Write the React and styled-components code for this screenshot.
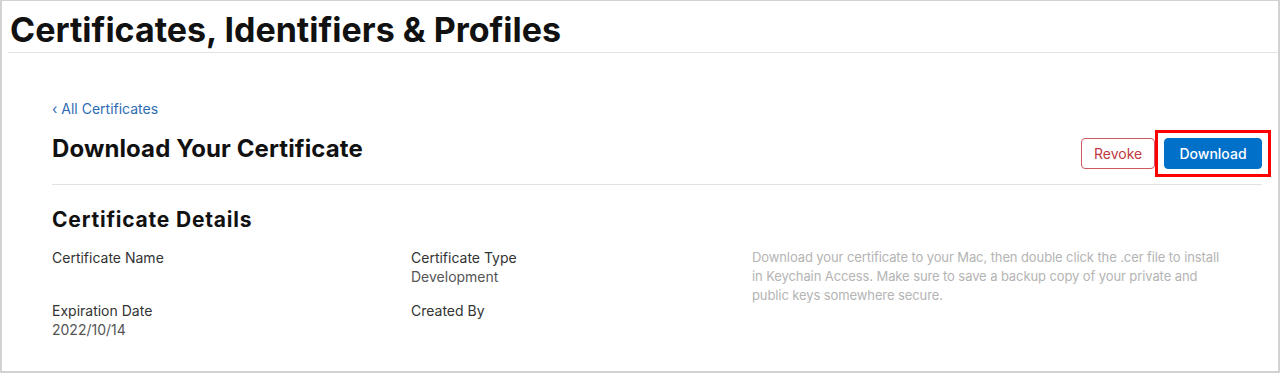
import React from "react";
import styled, { createGlobalStyle } from "styled-components";

const Global = createGlobalStyle`
  html, body { margin: 0; padding: 0; background: #fff; }
  body { font-family: Inter, "Liberation Sans", Arial, sans-serif; -webkit-font-smoothing: antialiased; }
  * { box-sizing: border-box; }
`;

const Frame = styled.div`
  width: 1280px;
  height: 373px;
  border: 2px solid #d2d2d2;
  border-top-width: 1px;
  background: #fff;
  overflow: hidden;
`;

const Header = styled.header`
  margin-left: 6px;
  height: 52px;
  border-bottom: 1px solid #e3e3e3;
  padding-left: 2px;
  display: flex;
  align-items: center;
`;

const PageTitle = styled.h1`
  margin: 0;
  font-size: 34px;
  font-weight: 700;
  letter-spacing: 0;
  color: #111;
  line-height: 1;
  padding-top: 6px;
`;

const Main = styled.main`
  padding: 47px 16px 0 50px;
`;

const BackLink = styled.a`
  display: block;
  font-size: 14px;
  color: #2d6cb4;
  text-decoration: none;
  line-height: 18px;
`;

const TitleRow = styled.div`
  display: flex;
  align-items: flex-end;
  justify-content: space-between;
  padding: 16px 0 15px;
  border-bottom: 1px solid #e2e2e2;
`;

const SectionTitle = styled.h2`
  margin: 0 0 5px;
  font-size: 24px;
  font-weight: 700;
  color: #111;
  letter-spacing: 0.1px;
  line-height: 30px;
`;

const Actions = styled.div`
  display: flex;
  align-items: center;
  gap: 9px;
`;

const Button = styled.button`
  font-family: inherit;
  font-size: 14px;
  height: 31px;
  padding: 0 12px;
  border-radius: 4px;
  cursor: pointer;
  border: 1px solid ${(p) => (p.$primary ? "#0070c9" : "#cc5a5e")};
  background: ${(p) => (p.$primary ? "#0070c9" : "#fff")};
  color: ${(p) => (p.$primary ? "#fff" : "#c0393f")};
  font-weight: ${(p) => (p.$primary ? 500 : 400)};
  width: ${(p) => (p.$primary ? "98px" : "74px")};
`;

const Highlight = styled.span`
  display: inline-flex;
  padding: 5px 6px;
  border: 3px solid #ff0000;
  margin: -8px -9px -8px -9px;
`;

const Details = styled.section`
  padding-top: 22px;
`;

const DetailsTitle = styled.h3`
  margin: 0 0 16px;
  font-size: 21px;
  font-weight: 700;
  color: #111;
  letter-spacing: 0.8px;
`;

const Grid = styled.div`
  display: grid;
  grid-template-columns: 359px 341px 1fr;
`;

const Column = styled.div`
  display: flex;
  flex-direction: column;
  gap: 15px;
`;

const Field = styled.div`
  font-size: 14px;
  line-height: 19px;
  min-height: 38px;
`;

const Label = styled.div`
  color: #333;
`;

const Value = styled.div`
  color: #555;
`;

const Note = styled.p`
  margin: 0;
  font-size: 13px;
  letter-spacing: -0.1px;
  line-height: 19px;
  color: #b4b4b4;
  max-width: 480px;
`;

export default function App() {
  return (
    <>
      <Global />
      <Frame>
        <Header>
          <PageTitle>Certificates, Identifiers &amp; Profiles</PageTitle>
        </Header>
        <Main>
          <BackLink href="#">‹ All Certificates</BackLink>
          <TitleRow>
            <SectionTitle>Download Your Certificate</SectionTitle>
            <Actions>
              <Button>Revoke</Button>
              <Highlight>
                <Button $primary>Download</Button>
              </Highlight>
            </Actions>
          </TitleRow>
          <Details>
            <DetailsTitle>Certificate Details</DetailsTitle>
            <Grid>
              <Column>
                <Field>
                  <Label>Certificate Name</Label>
                </Field>
                <Field>
                  <Label>Expiration Date</Label>
                  <Value>2022/10/14</Value>
                </Field>
              </Column>
              <Column>
                <Field>
                  <Label>Certificate Type</Label>
                  <Value>Development</Value>
                </Field>
                <Field>
                  <Label>Created By</Label>
                </Field>
              </Column>
              <Note>
                Download your certificate to your Mac, then double click the .cer file to install in Keychain Access. Make sure to save a backup copy of your private and public keys somewhere secure.
              </Note>
            </Grid>
          </Details>
        </Main>
      </Frame>
    </>
  );
}
